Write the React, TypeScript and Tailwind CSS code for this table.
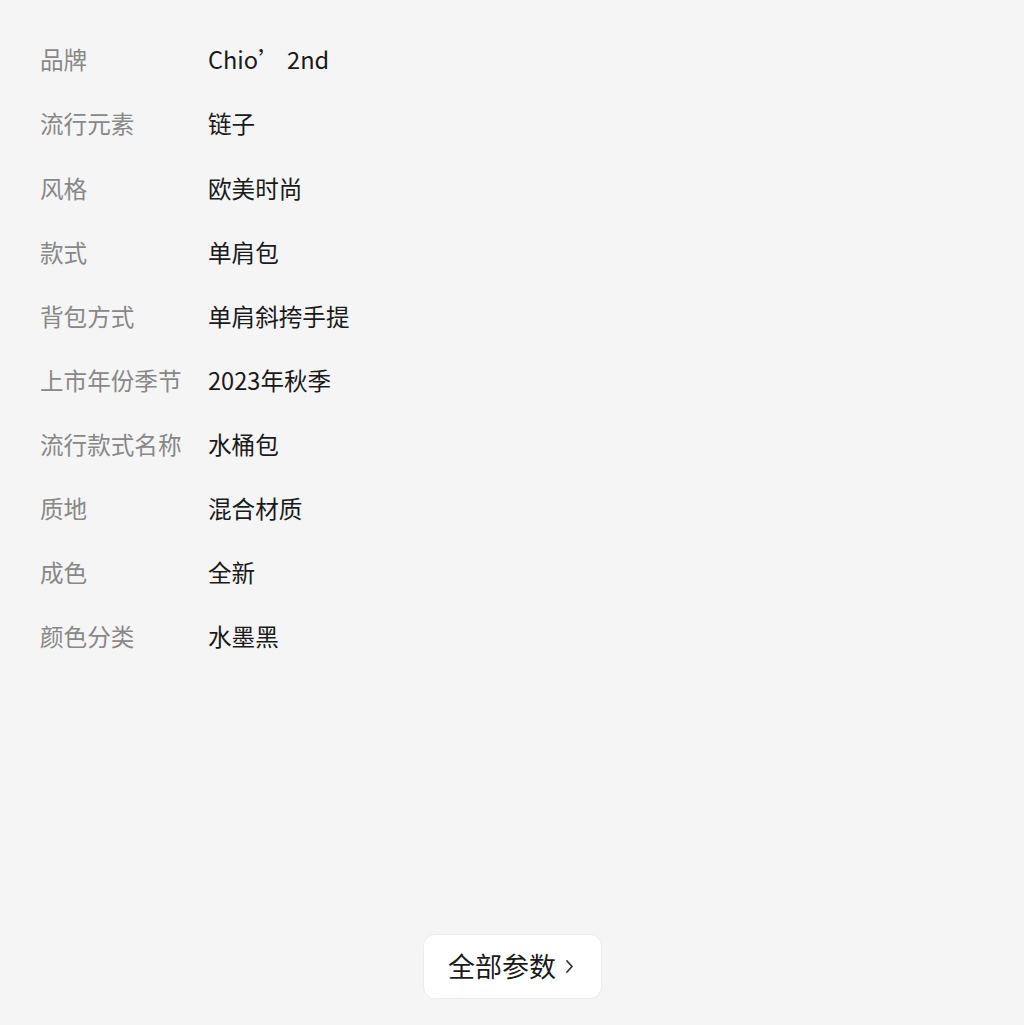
import React from "react";

const rows: [string, string][] = [
  ["品牌", "Chio’ 2nd"],
  ["流行元素", "链子"],
  ["风格", "欧美时尚"],
  ["款式", "单肩包"],
  ["背包方式", "单肩斜挎手提"],
  ["上市年份季节", "2023年秋季"],
  ["流行款式名称", "水桶包"],
  ["质地", "混合材质"],
  ["成色", "全新"],
  ["颜色分类", "水墨黑"],
];

export default function App() {
  return (
    <div
      className="flex h-[1025px] w-full flex-col bg-[#f5f5f5]"
      style={{ fontFamily: '"Noto Sans CJK SC", "Noto Sans", sans-serif' }}
    >
      <div className="flex flex-col pl-[40px] pt-[28px]">
        {rows.map(([k, v]) => (
          <div key={k} className="flex h-[64.1px] items-center text-[23.6px]">
            <div className="w-[168px] shrink-0 text-[#888888]">{k}</div>
            <div className="whitespace-pre text-[#1a1a1a]">{v}</div>
          </div>
        ))}
      </div>
      <div className="mt-auto mb-[26px] flex justify-center">
        <div className="flex h-[65px] w-[179px] items-center justify-center gap-[9px] rounded-[12px] border border-[#ececec] bg-white pr-[2px] text-[27px] text-[#1a1a1a]">
          <span>全部参数</span>
          <svg width="9" height="15" viewBox="0 0 9 15" fill="none">
            <path d="M2 2l5 5.5L2 13" stroke="#333" strokeWidth="1.8" strokeLinecap="round" strokeLinejoin="round" />
          </svg>
        </div>
      </div>
    </div>
  );
}
